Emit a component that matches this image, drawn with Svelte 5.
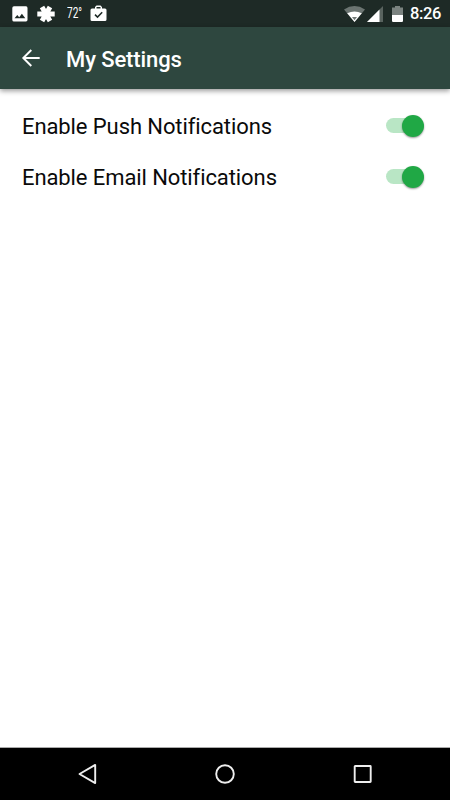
<script lang="ts">
  type Setting = { id: string; label: string; enabled: boolean };

  let settings: Setting[] = $state([
    { id: 'push', label: 'Enable Push Notifications', enabled: true },
    { id: 'email', label: 'Enable Email Notifications', enabled: true },
  ]);

  function toggle(setting: Setting) {
    setting.enabled = !setting.enabled;
  }
</script>

<div class="screen">
  <div class="status-bar">
    <div class="notifications">
      <svg class="photo" width="16" height="16" viewBox="0 0 16 16">
        <path fill="#fff" fill-rule="evenodd" d="M2 .3h12A1.7 1.7 0 0 1 15.500 2v12a1.700 1.700 0 0 1-1.500 1.500H2A1.700 1.700 0 0 1 .3 14V2A1.700 1.700 0 0 1 2 .3ZM2.500 12.300h10.800L9.900 7.700l-2.700 3.500-1.900-2.300Z" />
      </svg>
      <svg class="asterisk" width="18" height="18" viewBox="0 0 18 18">
        <g stroke="#fff" stroke-width="5">
          <path d="M.3 9h17.400M5 2l8 14M13 2L5 16" />
        </g>
      </svg>
      <span class="temperature">72°</span>
      <svg class="briefcase" width="17" height="17" viewBox="0 0 17 17">
        <path fill="#fff" fill-rule="evenodd" d="M5 3.500V2L6.500.500h4L12 2v1.500h3A1.500 1.500 0 0 1 16.500 5v9.500A1.500 1.500 0 0 1 15 16H2A1.500 1.500 0 0 1 .500 14.500V5A1.500 1.500 0 0 1 2 3.500ZM6.500 3.500h4V2h-4Z" />
        <path fill="none" stroke="#1e2a26" stroke-width="1.500" d="M5 9.600l2.500 2.500 4.700-4.900" />
      </svg>
    </div>
    <div class="system">
      <svg class="wifi" width="21" height="16" viewBox="0 0 21 16">
        <path fill="#6b7471" d="M0 3.500Q10.500-3.300 21 3.500L10.500 16Z" />
        <path fill="#fff" d="M3.200 7.300Q10.500 3.500 17.800 7.300L10.500 16Z" />
        <path fill="#737b78" d="M8 11h5l-2.500 3.200Z" />
      </svg>
      <svg class="signal" width="16" height="16" viewBox="0 0 16 16">
        <path fill="#59635f" d="M16 0v16H0Z" />
        <path fill="#fff" d="M12.500 3.500v12.500H0Z" />
      </svg>
      <svg class="battery" width="11" height="16" viewBox="0 0 11 16">
        <path fill="#7b8380" d="M3 0h5v1.500h3V9H0V1.500h3Z" />
        <path fill="#fff" d="M0 9h11v6.200l-.8.800H.8L0 15.200Z" />
      </svg>
      <span class="time">8:26</span>
    </div>
  </div>

  <header class="app-bar">
    <button class="back" aria-label="Back">
      <svg width="20" height="20" viewBox="0 0 20 20">
        <path fill="none" stroke="#fff" stroke-width="1.900" d="M18.700 10H2.500M10.300 2L2.300 10l8 8" />
      </svg>
    </button>
    <h1>My Settings</h1>
  </header>

  <main>
    {#each settings as setting (setting.id)}
      <div class="row">
        <span class="label">{setting.label}</span>
        <button
          class="switch"
          class:on={setting.enabled}
          role="switch"
          aria-checked={setting.enabled}
          aria-label={setting.label}
          onclick={() => toggle(setting)}
        >
          <span class="knob"></span>
        </button>
      </div>
    {/each}
  </main>

  <nav>
    <svg width="22" height="22" viewBox="0 0 22 22">
      <path d="M19.200 1.900v18.200L3.500 11Z" />
    </svg>
    <svg width="22" height="22" viewBox="0 0 22 22">
      <circle cx="11" cy="11" r="8.800" />
    </svg>
    <svg width="22" height="22" viewBox="0 0 22 22">
      <rect x="2.700" y="3" width="16" height="16" rx=".5" />
    </svg>
  </nav>
</div>

<style>
  :global(body) {
    margin: 0;
  }
  .screen {
    display: flex;
    flex-direction: column;
    width: 450px;
    height: 800px;
    background: #fff;
    font-family: Roboto, 'Liberation Sans', sans-serif;
    overflow: hidden;
  }
  svg {
    display: block;
    flex: none;
  }
  button {
    border: none;
    background: none;
    padding: 0;
    cursor: pointer;
  }
  .status-bar {
    display: flex;
    justify-content: space-between;
    height: 27px;
    box-sizing: border-box;
    padding: 0 9px 0 12px;
    background: #1e2a26;
    color: #fff;
  }
  .notifications,
  .system {
    display: flex;
    align-items: center;
  }
  .asterisk {
    margin-left: 9px;
  }
  .temperature {
    width: 16px;
    margin-left: 12px;
    font-size: 15.5px;
    line-height: 29px;
    transform: scaleX(0.65);
    transform-origin: left;
    white-space: nowrap;
  }
  .briefcase {
    margin-left: 7px;
  }
  .signal {
    margin-left: 2px;
  }
  .battery {
    margin-left: 9px;
  }
  .time {
    margin-left: 7px;
    font-size: 16.5px;
    font-weight: 500;
    line-height: 31px;
    letter-spacing: -0.4px;
  }
  .app-bar {
    position: relative;
    display: flex;
    align-items: center;
    height: 62px;
    box-sizing: border-box;
    padding-left: 21px;
    background: #2e473f;
    color: #fff;
    box-shadow: 0 2px 5px rgba(0, 0, 0, 0.4);
  }
  h1 {
    margin: 4px 0 0 25px;
    font-size: 22px;
    font-weight: 500;
    line-height: 26px;
    letter-spacing: -0.1px;
  }
  main {
    flex: 1;
    padding: 11px 26px 0 22px;
  }
  .row {
    display: flex;
    align-items: center;
    justify-content: space-between;
    height: 51px;
  }
  .label {
    padding-top: 2px;
    color: #0a0a0a;
    font-size: 22px;
    line-height: 26px;
    letter-spacing: -0.09px;
    white-space: nowrap;
  }
  .switch {
    display: flex;
    align-items: center;
    width: 38px;
    height: 15px;
    border-radius: 8px;
    background: #c4c4c4;
  }
  .switch.on {
    justify-content: flex-end;
    background: linear-gradient(90deg, #b9e6c5 30px, transparent 30px);
  }
  .knob {
    flex: none;
    width: 22px;
    height: 22px;
    border-radius: 50%;
    background: #f1f1f1;
    box-shadow: 0 1px 2px rgba(0, 0, 0, 0.4);
  }
  .on .knob {
    background: #20a845;
  }
  nav {
    display: flex;
    align-items: center;
    justify-content: space-between;
    height: 53px;
    box-sizing: border-box;
    padding: 0 76px;
    border-top: 1px solid #aaa;
    background: #000;
  }
  nav svg {
    fill: none;
    stroke: #eee;
    stroke-width: 1.9;
    stroke-linejoin: round;
  }
</style>
